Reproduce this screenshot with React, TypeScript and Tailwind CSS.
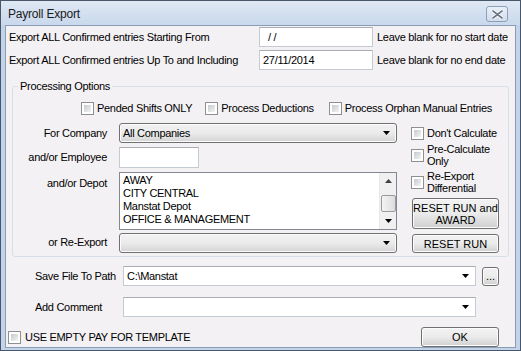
function Check({ className = "" }: { className?: string }) {
  return (
    <span className={`inline-block w-[13px] h-[13px] shrink-0 border border-[#8e8f8f] bg-white p-[2px] ${className}`}>
      <span className="block w-full h-full bg-gradient-to-br from-[#c6cad0] to-[#f3f3f3]" />
    </span>
  );
}

function Arrow() {
  return (
    <svg width="7" height="4" viewBox="0 0 7 4" className="shrink-0">
      <path d="M0 0h7L3.5 4z" fill="#000" />
    </svg>
  );
}

function DropList({ value = "", w }: { value?: string; w: string }) {
  return (
    <div
      className={`${w} h-[20px] flex items-center justify-between pl-[3px] pr-[6px] rounded-[3px] border border-[#707070] bg-gradient-to-b from-[#f2f2f2] via-[#ebebeb] to-[#d4d4d4] shadow-[inset_0_0_0_1px_#fcfcfc]`}
    >
      <span>{value}</span>
      <Arrow />
    </div>
  );
}

function Combo({ value = "", h = "h-[20px]" }: { value?: string; h?: string }) {
  return (
    <div className={`w-[353px] ${h} flex items-center justify-between pl-[3px] pr-[6px] border border-[#c5cbd3] border-t-[#abadb3] bg-white`}>
      <span>{value}</span>
      <Arrow />
    </div>
  );
}

function Btn({ children, className = "" }: { children: React.ReactNode; className?: string }) {
  return (
    <div
      className={`flex items-center justify-center text-center leading-[12px] rounded-[3px] border border-[#707070] bg-gradient-to-b from-[#f2f2f2] via-[#ebebeb] to-[#cfcfcf] shadow-[inset_0_0_0_1px_#fcfcfc] ${className}`}
    >
      {children}
    </div>
  );
}

export default function App() {
  const depots = ["AWAY", "CITY CENTRAL", "Manstat Depot", "OFFICE & MANAGEMENT"];

  return (
    <div className="w-[521px] h-[351px] flex flex-col border border-[#48566a] bg-[#c3d4ea] font-['Liberation_Sans',Arial,sans-serif] text-[11px] leading-[13px] tracking-[-0.3px] text-black overflow-hidden">
      {/* title bar */}
      <div className="h-[24px] shrink-0 flex items-center justify-between pl-[7px] pr-[12px] bg-gradient-to-b from-[#dfe8f4] to-[#c9d8ec]">
        <span className="text-[12px] tracking-[-0.2px] text-[#1a1a1a] mt-[3px]">Payroll Export</span>
        <div className="w-[22px] h-[16px] mt-[2px] rounded-[3px] border border-[#8da0ba] bg-gradient-to-b from-[#e9eff7] to-[#d1ddee] flex items-center justify-center">
          <svg width="11" height="9" viewBox="0 0 11 9">
            <path d="M1 1l9 7M10 1L1 8" stroke="#fff" strokeWidth="3.4" strokeLinecap="round" />
            <path d="M1 1l9 7M10 1L1 8" stroke="#6b7686" strokeWidth="1.6" strokeLinecap="round" />
          </svg>
        </div>
      </div>

      {/* client */}
      <div className="flex-1 mx-[4px] mb-[3px] border border-[#8b9db5] bg-[#f4f1f4] flex flex-col">
        <div className="flex items-center h-[20px] mt-[1px] pl-[3px]">
          <span className="w-[250px]">Export ALL Confirmed entries Starting From</span>
          <div className="w-[114px] h-[20px] flex items-center pl-[8px] border border-[#c5cbd3] border-t-[#abadb3] bg-white">/ /</div>
          <span className="ml-[4px]">Leave blank for no start date</span>
        </div>
        <div className="flex items-center h-[20px] mt-[3px] pl-[3px]">
          <span className="w-[250px]">Export ALL Confirmed entries Up To and Including</span>
          <div className="w-[114px] h-[20px] flex items-center pl-[3px] border border-[#c5cbd3] border-t-[#abadb3] bg-white">27/11/2014</div>
          <span className="ml-[4px]">Leave blank for no end date</span>
        </div>

        <fieldset className="ml-[6px] mt-[10px] w-[497px] h-[177px] border border-[#d5dfe5] rounded-[3px]">
          <legend className="ml-[5px] px-[2px]">Processing Options</legend>

          <div className="flex items-center h-[13px] mt-[9px] pl-[68px]">
            <Check />
            <span className="ml-[3px]">Pended Shifts ONLY</span>
            <Check className="ml-[13px]" />
            <span className="ml-[3px]">Process Deductions</span>
            <Check className="ml-[15px]" />
            <span className="ml-[3px]">Process Orphan Manual Entries</span>
          </div>

          <div className="flex mt-[8px]">
            {/* left block */}
            <div className="grid grid-cols-[94px_278px] gap-x-[12px] items-center">
              <span className="text-right">For Company</span>
              <DropList value="All Companies" w="w-[278px]" />

              <span className="text-right mt-[4px]">and/or Employee</span>
              <div className="w-[80px] h-[21px] mt-[4px] border border-[#c5cbd3] border-t-[#abadb3] bg-white" />

              <span className="text-right self-start mt-[8px]">and/or Depot</span>
              <div className="h-[58px] mt-[3px] flex border border-[#828790] bg-white">
                <div className="flex-1 pl-[3px] pt-[1px] leading-[13px]">
                  {depots.map((d) => (
                    <div key={d}>{d}</div>
                  ))}
                </div>
                <div className="w-[17px] flex flex-col items-center bg-[#f0f0f0] border-l border-[#e8e8e8]">
                  <div className="h-[16px] flex items-center justify-center">
                    <svg width="7" height="4" viewBox="0 0 7 4">
                      <path d="M0 4h7L3.5 0z" fill="#404040" />
                    </svg>
                  </div>
                  <div className="w-[15px] h-[17px] mt-[6px] rounded-[2px] border border-[#9a9a9a] bg-gradient-to-r from-[#f4f4f4] to-[#dcdcdc]" />
                  <div className="flex-1" />
                  <div className="h-[15px] flex items-center justify-center">
                    <Arrow />
                  </div>
                </div>
              </div>

              <span className="text-right mt-[3px]">or Re-Export</span>
              <DropList w="w-[278px] mt-[3px]" />
            </div>

            {/* right block */}
            <div className="ml-[14px] flex flex-col w-[90px]">
              <div className="flex items-center mt-[4px] h-[13px]">
                <Check />
                <span className="ml-[3px]">Don't Calculate</span>
              </div>
              <div className="flex items-center mt-[3px] leading-[12px]">
                <Check />
                <span className="ml-[3px]">
                  Pre-Calculate
                  <br />
                  Only
                </span>
              </div>
              <div className="flex items-center mt-[3px] leading-[12px]">
                <Check />
                <span className="ml-[3px]">
                  Re-Export
                  <br />
                  Differential
                </span>
              </div>
              <Btn className="w-[87px] h-[31px] mt-[4px] ml-[1px] tracking-[0px]">
                RESET RUN and
                <br />
                AWARD
              </Btn>
              <Btn className="w-[87px] h-[19px] mt-[5px] ml-[1px] tracking-[0px]">RESET RUN</Btn>
            </div>
          </div>
        </fieldset>

        <div className="flex items-center mt-[9px] pl-[29px]">
          <span className="w-[88px]">Save File To Path</span>
          <Combo value="C:\Manstat" />
          <Btn className="w-[17px] h-[19px] ml-[6px] tracking-[0px]">...</Btn>
        </div>
        <div className="flex items-center mt-[11px] pl-[29px]">
          <span className="w-[88px]">Add Comment</span>
          <Combo h="h-[20px]" />
        </div>

        <div className="flex items-center mt-[10px] pl-[2px]">
          <Check />
          <span className="ml-[4px]">USE EMPTY PAY FOR TEMPLATE</span>
          <div className="flex-1" />
          <Btn className="w-[78px] h-[20px] mr-[16px] tracking-[0px]">OK</Btn>
        </div>
      </div>
    </div>
  );
}
